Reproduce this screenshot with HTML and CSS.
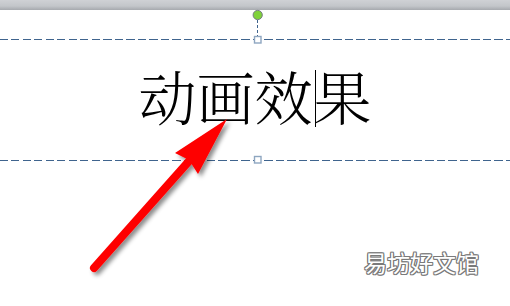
FILE: index.html
```html
<!DOCTYPE html>
<html lang="zh">
<head>
<meta charset="utf-8">
<title>动画效果</title>
<link rel="stylesheet" href="styles.css">
</head>
<body>
<div class="page">
  <div class="topbar"></div>
  <div class="stage">
    <div class="frame">
      <div class="guide"></div>
      <div class="textbox">
        <div class="text">动画效<span class="caret"></span>果</div>
      </div>
      <div class="guide"></div>
    </div>
  </div>
  <svg class="overlay" width="510" height="306" viewBox="0 0 510 306" xmlns="http://www.w3.org/2000/svg">
    <defs>
      <filter id="shadow" x="-20%" y="-20%" width="140%" height="140%">
        <feDropShadow dx="3" dy="3" stdDeviation="2" flood-color="#000" flood-opacity="0.45"/>
      </filter>
    </defs>
    <line x1="257.5" y1="20" x2="257.5" y2="36" stroke="#3f648e" stroke-width="1" stroke-dasharray="3 2"/>
    <circle cx="257.7" cy="15" r="4.6" fill="#80d23a" stroke="#767b82" stroke-width="1"/>
    <rect x="254.5" y="36.5" width="6.5" height="6.5" fill="#fff" stroke="#8ea6c0" stroke-width="1.4"/>
    <rect x="254.5" y="156.5" width="6.5" height="6.5" fill="#fff" stroke="#8ea6c0" stroke-width="1.4"/>
    <g filter="url(#shadow)">
      <line x1="94" y1="268" x2="190" y2="160" stroke="#fe0000" stroke-width="8" stroke-linecap="round"/>
      <polygon points="227,119 175,153 189,160 198,174" fill="#fe0000"/>
    </g>
  </svg>
  <div class="watermark">易坊好文馆</div>
</div>
</body>
</html>
```

FILE: styles.css
```css
html, body {
  margin: 0;
  padding: 0;
  background: #fff;
}

.page {
  position: relative;
  width: 510px;
  height: 306px;
  overflow: hidden;
  background: #fff;
}

.topbar {
  height: 10px;
  background: linear-gradient(#cfd1d5, #c3c6ca 60%, #a6a9ae);
}

.stage {
  height: 296px;
}

.frame {
  padding-top: 29px;
}

.guide {
  height: 1px;
  background: repeating-linear-gradient(90deg, #3f648e 0 8px, transparent 8px 11.5px);
}

.textbox {
  height: 120px;
  display: flex;
  justify-content: center;
  padding-top: 26px;
  box-sizing: border-box;
}

.text {
  font-family: "Noto Serif CJK SC", "Noto Sans CJK SC", serif;
  font-weight: 300;
  font-size: 58px;
  line-height: 58px;
  height: 58px;
  color: #000;
  white-space: nowrap;
}

.caret {
  display: inline-block;
  width: 1px;
  height: 57px;
  margin: 0 -2px 0 2px;
  background: #000;
  vertical-align: top;
  position: relative;
  top: 4px;
}

.overlay {
  position: absolute;
  left: 0;
  top: 0;
}

.watermark {
  position: absolute;
  left: 364px;
  top: 251px;
  font-family: "Noto Sans CJK SC", sans-serif;
  font-size: 23px;
  line-height: 23px;
  color: #fff;
  white-space: nowrap;
  text-shadow:
    1px 0 0 #7a7a7a, -1px 0 0 #7a7a7a, 0 1px 0 #7a7a7a, 0 -1px 0 #7a7a7a,
    1px 1px 0 #7a7a7a, -1px -1px 0 #7a7a7a, 1px -1px 0 #7a7a7a, -1px 1px 0 #7a7a7a;
}
```
